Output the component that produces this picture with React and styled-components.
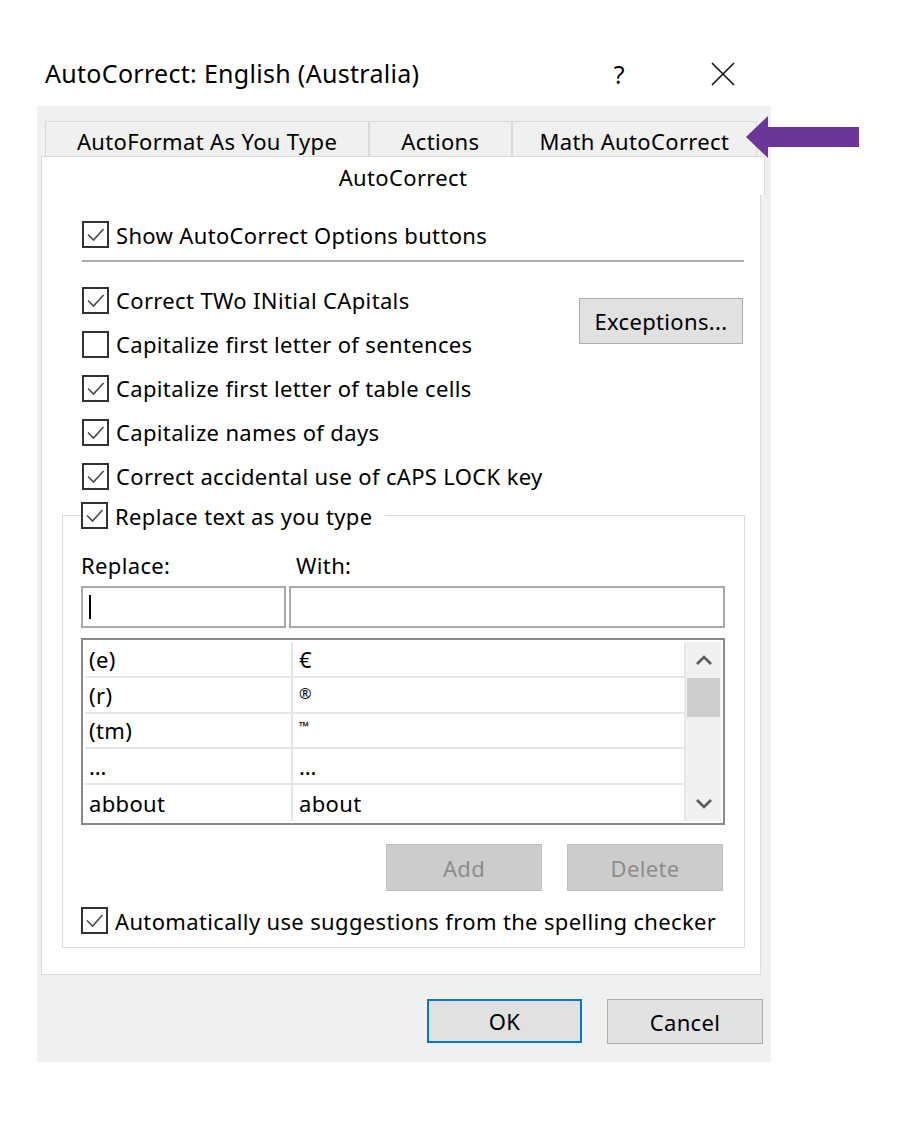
import styled, { createGlobalStyle } from "styled-components";

const GlobalStyle = createGlobalStyle`
  * { box-sizing: border-box; }
  body {
    margin: 0;
    background: #ffffff;
    font-family: "Noto Sans", "Open Sans", sans-serif;
    letter-spacing: 0.35px;
    color: #000;
  }
`;

const Page = styled.div`
  position: relative;
  padding: 55px 0 0 37px;
  width: 914px;
  height: 1144px;
`;

const Window = styled.div`
  width: 734px;
`;

const TitleBar = styled.div`
  height: 51px;
  display: flex;
  align-items: center;
  padding: 0 36px 0 8px;
`;

const Title = styled.div`
  flex: 1;
  font-size: 25px;
  letter-spacing: 0.3px;
  margin-top: -16px;
`;

const Help = styled.div`
  font-size: 25px;
  margin-top: -14px;
  margin-right: 86px;
`;

const CloseIcon = styled.svg`
  width: 24px;
  height: 24px;
  margin-top: -14px;
`;

const Panel = styled.div`
  background: #f0f0f0;
  padding: 15px 0 18px 4px;
`;

const TabRow = styled.div`
  display: flex;
  width: 712px;
  height: 35px;
  margin-left: 4px;
  border: 1px solid #d9d9d9;
  border-bottom: none;
`;

const Tab = styled.div`
  width: ${(p) => p.$w}px;
  display: flex;
  align-items: center;
  justify-content: center;
  font-size: 22px;
  border-right: ${(p) => (p.$last ? "none" : "2px solid #d9d9d9")};
  padding-top: 4px;
`;

const SelectedTab = styled.div`
  width: 724px;
  height: 39px;
  background: #fff;
  border: 1px solid #d9d9d9;
  border-bottom: none;
  display: flex;
  justify-content: center;
  align-items: center;
  font-size: 22px;
  padding-top: 2px;
`;

const ContentPane = styled.div`
  width: 720px;
  background: #fff;
  border: 1px solid #dcdcdc;
  border-top: none;
  padding: 26px 14px 26px 20px;
`;

const TopSection = styled.div`
  padding: 0 3px 0 20px;
`;

const CheckRow = styled.div`
  display: flex;
  align-items: center;
  gap: 7px;
  height: ${(p) => p.$h || 44}px;
  font-size: 22px;
  white-space: nowrap;
`;

const Separator = styled.div`
  height: 2px;
  background: #ababab;
  margin: 12px -1px 0 0;
`;

const OptionsBlock = styled.div`
  display: flex;
  margin-top: 16px;
`;

const OptionsList = styled.div`
  display: flex;
  flex-direction: column;
`;

const Button = styled.div`
  width: ${(p) => p.$w}px;
  height: ${(p) => p.$h}px;
  display: flex;
  align-items: center;
  justify-content: center;
  font-size: 22px;
  background: ${(p) => (p.$disabled ? "#cccccc" : "#e1e1e1")};
  color: ${(p) => (p.$disabled ? "#8c8c8c" : "#000")};
  border: ${(p) =>
    p.$primary ? "2px solid #0078d7" : p.$disabled ? "1px solid #bfbfbf" : "1px solid #adadad"};
`;

const ExceptionsButton = styled(Button)`
  margin: 20px 0 0 auto;
`;

const GroupBox = styled.fieldset`
  margin: 4px 0 0 0;
  width: 683px;
  border: 1px solid #dcdcdc;
  padding: 0 19px 13px 18px;
  min-width: 0;
`;

const Legend = styled.legend`
  padding: 0 12px 0 0;
`;

const FieldGrid = styled.div`
  display: grid;
  grid-template-columns: 205px 1fr;
  column-gap: 3px;
`;

const Labels = styled(FieldGrid)`
  margin-top: 22px;
  height: 28px;
  font-size: 22px;
  line-height: 28px;
`;

const WithLabel = styled.div`
  padding-left: 7px;
`;

const Inputs = styled(FieldGrid)`
  margin-top: 7px;
  height: 42px;
`;

const TextBox = styled.div`
  border: 2px solid #a9a9a9;
  background: #fff;
  display: flex;
  align-items: center;
  padding-left: 6px;
`;

const Caret = styled.div`
  width: 2px;
  height: 24px;
  background: #000;
`;

const ListBox = styled.div`
  margin-top: 10px;
  height: 187px;
  border: 2px solid #8a8a8a;
  padding: 2px;
  display: flex;
`;

const Table = styled.div`
  flex: 1;
  display: flex;
  flex-direction: column;
`;

const Row = styled.div`
  display: flex;
  height: 36px;
  border-bottom: ${(p) => (p.$last ? "none" : "2px solid #e6e6e6")};
  font-size: 22px;
`;

const Cell = styled.div`
  width: ${(p) => (p.$first ? "208px" : "auto")};
  flex: ${(p) => (p.$first ? "none" : 1)};
  border-right: 2px solid #e6e6e6;
  padding-left: ${(p) => (p.$first ? 4 : 6)}px;
  display: flex;
  align-items: center;
`;

const SmallSymbol = styled.span`
  font-size: ${(p) => p.$size}px;
  margin-top: ${(p) => p.$up || 0}px;
`;

const ScrollBar = styled.div`
  width: 35px;
  background: #f0f0f0;
  display: flex;
  flex-direction: column;
  align-items: center;
`;

const ArrowBox = styled.div`
  height: 36px;
  display: flex;
  align-items: center;
  justify-content: center;
`;

const Thumb = styled.div`
  width: 33px;
  height: 39px;
  background: #cdcdcd;
`;

const Spacer = styled.div`
  flex: 1;
`;

const ButtonRow = styled.div`
  display: flex;
  justify-content: flex-end;
  gap: 25px;
  margin-top: ${(p) => p.$mt}px;
  padding-right: ${(p) => p.$pr || 0}px;
`;

const LastRow = styled(CheckRow)`
  margin-top: 16px;
`;

const Annotation = styled.svg`
  position: absolute;
  left: 746px;
  top: 116px;
`;

function CheckBox({ checked = true }) {
  return (
    <svg width="27" height="27" viewBox="0 0 27 27">
      <rect x="1" y="1" width="25" height="25" fill="#fff" stroke="#333" strokeWidth="2" />
      {checked && (
        <path d="M6 13.5 L11.5 19 L21.5 8" fill="none" stroke="#4a4a4a" strokeWidth="1.6" />
      )}
    </svg>
  );
}

function Chevron({ up }) {
  return (
    <svg width="18" height="11" viewBox="0 0 18 11">
      <polyline
        points={up ? "2,9 9,2 16,9" : "2,2 9,9 16,2"}
        fill="none"
        stroke="#5a5a5a"
        strokeWidth="2.6"
      />
    </svg>
  );
}

const options = [
  { label: "Correct TWo INitial CApitals", checked: true },
  { label: "Capitalize first letter of sentences", checked: false },
  { label: "Capitalize first letter of table cells", checked: true },
  { label: "Capitalize names of days", checked: true },
  { label: "Correct accidental use of cAPS LOCK key", checked: true },
];

const entries = [
  ["(e)", "€"],
  ["(r)", <SmallSymbol $size={15} $up={-4}>®</SmallSymbol>],
  ["(tm)", <SmallSymbol $size={13} $up={-8}>™</SmallSymbol>],
  ["…", "…"],
  ["abbout", "about"],
];

export default function App() {
  return (
    <Page>
      <GlobalStyle />
      <Window>
        <TitleBar>
          <Title>AutoCorrect: English (Australia)</Title>
          <Help>?</Help>
          <CloseIcon viewBox="0 0 24 24">
            <path d="M1 1 L23 23 M23 1 L1 23" stroke="#111" strokeWidth="1.6" />
          </CloseIcon>
        </TitleBar>
        <Panel>
          <TabRow>
            <Tab $w={325}>AutoFormat As You Type</Tab>
            <Tab $w={143}>Actions</Tab>
            <Tab $w={244} $last>Math AutoCorrect</Tab>
          </TabRow>
          <SelectedTab>AutoCorrect</SelectedTab>
          <ContentPane>
            <TopSection>
              <CheckRow $h={27}>
                <CheckBox />
                Show AutoCorrect Options buttons
              </CheckRow>
              <Separator />
              <OptionsBlock>
                <OptionsList>
                  {options.map((o) => (
                    <CheckRow key={o.label}>
                      <CheckBox checked={o.checked} />
                      {o.label}
                    </CheckRow>
                  ))}
                </OptionsList>
                <ExceptionsButton $w={164} $h={46}>
                  Exceptions...
                </ExceptionsButton>
              </OptionsBlock>
            </TopSection>
            <GroupBox>
              <Legend>
                <CheckRow $h={27}>
                  <CheckBox />
                  Replace text as you type
                </CheckRow>
              </Legend>
              <Labels>
                <div>Replace:</div>
                <WithLabel>With:</WithLabel>
              </Labels>
              <Inputs>
                <TextBox>
                  <Caret />
                </TextBox>
                <TextBox />
              </Inputs>
              <ListBox>
                <Table>
                  {entries.map(([a, b], i) => (
                    <Row key={i} $last={i === entries.length - 1}>
                      <Cell $first>{a}</Cell>
                      <Cell>{b}</Cell>
                    </Row>
                  ))}
                </Table>
                <ScrollBar>
                  <ArrowBox>
                    <Chevron up />
                  </ArrowBox>
                  <Thumb />
                  <Spacer />
                  <ArrowBox>
                    <Chevron />
                  </ArrowBox>
                </ScrollBar>
              </ListBox>
              <ButtonRow $mt={19} $pr={2}>
                <Button $w={156} $h={47} $disabled>
                  Add
                </Button>
                <Button $w={156} $h={47} $disabled>
                  Delete
                </Button>
              </ButtonRow>
              <LastRow $h={27}>
                <CheckBox />
                Automatically use suggestions from the spelling checker
              </LastRow>
            </GroupBox>
          </ContentPane>
          <ButtonRow $mt={24} $pr={8}>
            <Button $w={155} $h={44} $primary>
              OK
            </Button>
            <Button $w={156} $h={45}>
              Cancel
            </Button>
          </ButtonRow>
        </Panel>
      </Window>
      <Annotation width="114" height="43" viewBox="0 0 114 43">
        <polygon points="0,21 22,0 22,11 113,11 113,31 22,31 22,42" fill="#6b3599" />
      </Annotation>
    </Page>
  );
}
